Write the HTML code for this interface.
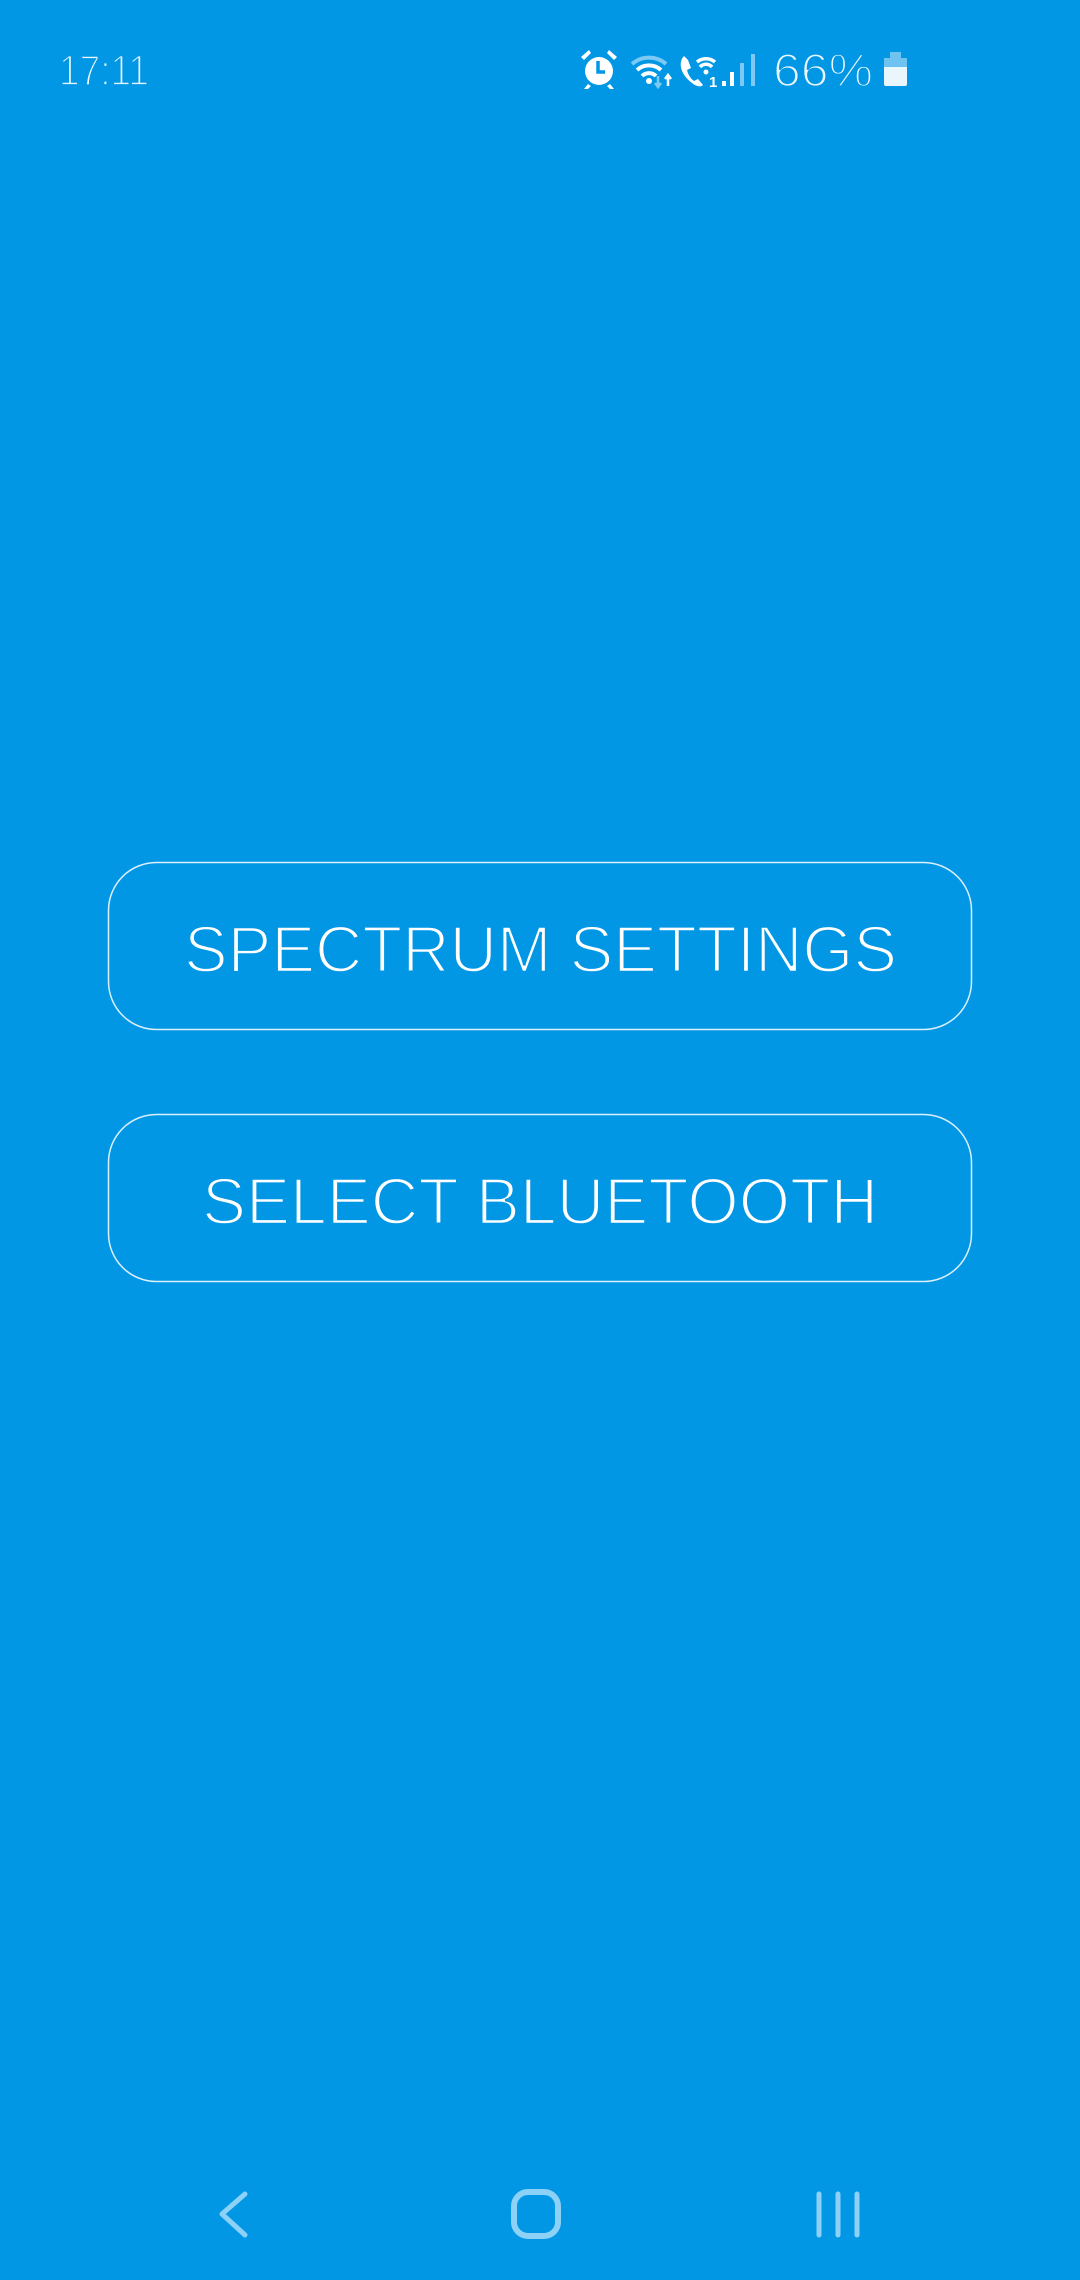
<!DOCTYPE html>
<html><head><meta charset="utf-8"><style>
html,body{margin:0;padding:0;}
body{width:1080px;height:2280px;background:#0197e5;overflow:hidden;position:relative;font-family:"Liberation Sans",sans-serif;}
svg{position:absolute;left:0;top:0;}
.thin{stroke:#0197e5;stroke-width:1.6px;paint-order:normal;}
</style></head><body>
<svg width="1080" height="2280" viewBox="0 0 1080 2280">
<!-- status bar -->
<text class="thin" x="59" y="85" font-family="Liberation Sans, sans-serif" font-size="43" fill="#eaf6fd" textLength="90" lengthAdjust="spacingAndGlyphs" style="stroke-width:1.8px">17:11</text>
<!-- alarm -->
<g fill="#fff">
<circle cx="599" cy="71" r="14"/>
<path d="M584 60 l7 -7 l-2 -3 l-8 7z M614 60 l-7 -7 l2 -3 l8 7z"/>
<path d="M588 84 l-4 5 h4 l3 -3z M610 84 l4 5 h-4 l-3 -3z"/>
</g>
<path d="M598 61 v11 h7" stroke="#0197e5" stroke-width="3.5" fill="none"/>
<!-- wifi 1 -->
<path d="M632 64 a26 26 0 0 1 34 0" stroke="#7ccaf3" stroke-width="4" fill="none"/>
<path d="M637 70 a18 18 0 0 1 24 0" stroke="#fff" stroke-width="4" fill="none"/>
<path d="M642 76 a10 10 0 0 1 14 0" stroke="#fff" stroke-width="4" fill="none"/>
<circle cx="649" cy="81" r="3" fill="#fff"/>
<path d="M658 76 v10 M655 83 l3 4 l3 -4" stroke="#7ccaf3" stroke-width="2.5" fill="none"/>
<path d="M668 86 v-10 M665 79 l3 -4 l3 4" stroke="#fff" stroke-width="2.5" fill="none"/>
<!-- wifi call -->
<path d="M684 56 c-6 6 -4 18 8 27 c5 4 9 4 11 2 l-5 -6 l-4 2 c-4 -3 -6 -7 -7 -11 l4 -2 l-3 -8z" fill="#fff"/>
<path d="M697 62 a14 14 0 0 1 18 0" stroke="#fff" stroke-width="3.5" fill="none"/>
<path d="M700 67 a8 8 0 0 1 12 0" stroke="#fff" stroke-width="3.5" fill="none"/>
<circle cx="706" cy="72" r="2.5" fill="#fff"/>
<text x="709" y="87" font-family="Liberation Sans, sans-serif" font-size="15" font-weight="bold" fill="#fff">1</text>
<!-- signal -->
<rect x="722" y="81" width="4" height="5" fill="#fff"/>
<rect x="730" y="72" width="4" height="14" fill="#fff"/>
<rect x="740" y="63" width="4" height="23" fill="#7ccaf3"/>
<rect x="751" y="54" width="4" height="32" fill="#7ccaf3"/>
<text class="thin" x="773" y="86" font-family="Liberation Sans, sans-serif" font-size="46" fill="#eaf6fd" textLength="100" lengthAdjust="spacingAndGlyphs" style="stroke-width:1.8px">66%</text>
<!-- battery -->
<rect x="884" y="58" width="23" height="28" rx="2" fill="#eaf6fd"/>
<rect x="884" y="58" width="23" height="9" fill="#6fc3f1"/>
<rect x="890" y="52" width="11" height="6" fill="#6fc3f1"/>

<!-- buttons -->
<rect x="108.5" y="862.5" width="863" height="167" rx="48" fill="none" stroke="#d9effc" stroke-width="1.5"/>
<text class="thin" x="184" y="972" font-family="Liberation Sans, sans-serif" font-size="66" fill="#fff" textLength="713" lengthAdjust="spacingAndGlyphs" style="stroke-width:2.4px">SPECTRUM SETTINGS</text>
<rect x="108.5" y="1114.5" width="863" height="167" rx="48" fill="none" stroke="#d9effc" stroke-width="1.5"/>
<text class="thin" x="202" y="1224" font-family="Liberation Sans, sans-serif" font-size="66" fill="#fff" textLength="676" lengthAdjust="spacingAndGlyphs" style="stroke-width:2.4px">SELECT BLUETOOTH</text>

<!-- nav -->
<path d="M245 2194 L222 2214 L245 2235" stroke="#8dd2f6" stroke-width="5" stroke-linecap="round" stroke-linejoin="round" fill="none"/>
<rect x="514" y="2192" width="44" height="44" rx="14" fill="none" stroke="#8dd2f6" stroke-width="6"/>
<path d="M819 2194 v41 M838 2194 v41 M857 2194 v41" stroke="#8dd2f6" stroke-width="5" stroke-linecap="round"/>
</svg>
</body></html>
